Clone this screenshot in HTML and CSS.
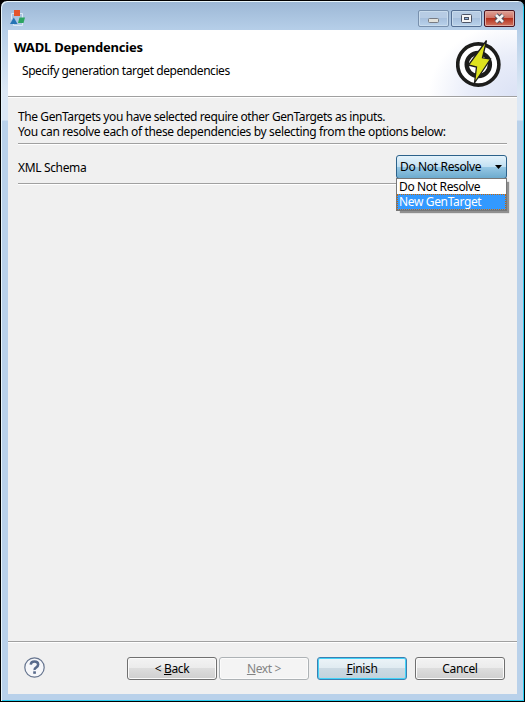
FILE: index.html
```html
<!DOCTYPE html>
<html lang="en">
<head>
<meta charset="utf-8">
<title>WADL Dependencies</title>
<link rel="stylesheet" href="styles.css">
</head>
<body>
<div class="window">
  <div class="titlebar">
    <svg class="app-icon" width="16" height="17" viewBox="0 0 16 17">
      <path d="M1.5 3.5h11v12h-9v-3M1.5 3.5v6" fill="none" stroke="#dbe9f5"/>
      <rect x="4" y="0" width="6" height="6" fill="#e4552b"/>
      <path d="M0 14 3.8 7.5 7.5 14z" fill="#2474b5"/>
      <path d="M9.5 7.5H15L13.5 13H8z" fill="#2ca562"/>
    </svg>
    <div class="controls">
      <span class="ctl"><svg width="29" height="15"><rect x="9.5" y="7.5" width="10" height="4" rx="1" fill="#e2e2dc" stroke="#777b83"/></svg></span>
      <span class="ctl max"><svg width="29" height="15"><rect x="9.5" y="3.5" width="10" height="8" rx="1" fill="#f6f6f6" stroke="#4d5466"/><rect x="12.5" y="6.5" width="4" height="2" fill="#8fb2dc" stroke="#4d5466"/></svg></span>
      <span class="ctl close"><svg width="29" height="15"><path d="M11 4l7 7M18 4l-7 7" stroke="#54505d" stroke-width="4.6"/><path d="M11 4l7 7M18 4l-7 7" stroke="#f4f4f4" stroke-width="2.6"/></svg></span>
    </div>
  </div>
  <div class="client">
    <header class="banner">
      <div>
        <h1>WADL Dependencies</h1>
        <p class="subtitle">Specify generation target dependencies</p>
      </div>
      <svg class="logo" width="48" height="50" viewBox="0 0 48 50">
        <circle cx="22.3" cy="25.5" r="20.6" fill="#fff" stroke="#1d1d1b" stroke-width="3.6"/>
        <circle cx="22.3" cy="25.5" r="11.6" fill="#fff" stroke="#1d1d1b" stroke-width="4.4"/>
        <path d="M30.5 1.5 L12.5 26 L20.5 28 L18.5 44 L34.5 20 L26.5 18.8 Z" fill="#dfe31f" stroke="#1d1d1b" stroke-width="1.3"/>
      </svg>
    </header>
    <main class="page">
      <p class="intro"><span class="line-one">The GenTargets you have selected require other GenTargets as inputs.</span><br><span>You can resolve each of these dependencies by selecting from the options below:</span></p>
      <div class="rule"></div>
      <div class="row">
        <label>XML Schema</label>
        <div class="combo"><span>Do Not Resolve</span><svg width="7" height="4"><path d="M0 0h7L3.5 4z" fill="#000"/></svg>
          <div class="menu">
            <div class="option">Do Not Resolve</div>
            <div class="option selected">New GenTarget</div>
          </div>
        </div>
      </div>
      <div class="rule"></div>
    </main>
    <footer class="footer">
      <svg class="help" width="21" height="21" viewBox="0 0 21 21"><circle cx="10.5" cy="10.5" r="9.7" fill="#f6f7fa" stroke="#66758f" stroke-width="1.2"/><path d="M6.7 7.7Q7 4.6 10.5 4.6T14.2 7.6Q14.2 9.2 12.3 10.3T10.6 13" fill="none" stroke="#596b8c" stroke-width="2.5"/><rect x="9.2" y="14.3" width="2.7" height="2.5" fill="#596b8c"/></svg>
      <div class="buttons">
        <span class="btn">&lt; <u>B</u>ack</span>
        <span class="btn disabled"><u>N</u>ext &gt;</span>
        <span class="btn primary"><u>F</u>inish</span>
        <span class="btn">Cancel</span>
      </div>
    </footer>
  </div>
</div>
</body>
</html>
```
FILE: styles.css
```css
* { box-sizing: border-box; }
body {
  margin: 0;
  background: #000;
  font: 12px/15px "Noto Sans", "Open Sans", sans-serif;
  letter-spacing: -0.35px;
  color: #000;
}
h1, p { margin: 0; font-size: 12px; }
.window {
  width: 525px;
  height: 702px;
  border: 1px solid #000;
  border-radius: 7px 7px 0 0;
  padding: 0 6px 7px;
  background: linear-gradient(#9cb7d5 0, #b5cee8 28px, #dce8f5 90px, #dce8f5 119px, #b9d1ea 120px);
  box-shadow: inset 1px 1px 0 #e8f5fb, inset -1px -1px 0 #29cdf0;
  display: flex;
  flex-direction: column;
}
.titlebar {
  height: 29px;
  flex: none;
  display: flex;
  justify-content: space-between;
  padding: 9px 3px 0 3px;
}
.controls { display: flex; gap: 2px; }
.ctl {
  width: 31px;
  height: 17px;
  border: 1px solid #7890ad;
  border-radius: 2px;
  background: linear-gradient(#b7cce4 0 48%, #a7c0dd 50%, #b9d2eb);
  box-shadow: inset 0 0 0 1px #c9dced;
}
.ctl svg { display: block; }
.ctl.max { border-color: #556f93; }
.ctl.close {
  border-color: #4b1522;
  background: linear-gradient(#dfa197 0, #cf7263 47%, #b5311d 50%, #d17662);
  box-shadow: inset 0 0 0 1px #e0a99e;
}
.client {
  flex: 1;
  margin: 0 1px;
  background: #f0f0f0;
  display: flex;
  flex-direction: column;
}
.banner {
  height: 67px;
  display: flex;
  justify-content: space-between;
  padding: 10px 15px 0 6px;
  background: radial-gradient(ellipse 90px 75px at 510px 67px, #dbe2f5 0, #e9edf9 55%, #fff 100%);
  border-bottom: 1px solid #a0a0a0;
  box-shadow: 0 1px #fff;
}
h1 { font-weight: 700; font-size: 13px; letter-spacing: -0.2px; }
.subtitle { padding: 8px 0 0 8px; letter-spacing: -0.43px; }
.logo { margin: -1px -2px 0 0; }
.page { flex: 1; padding: 12px 10px 0; }
.intro { height: 34px; }
.line-one { letter-spacing: -0.41px; }
.rule { height: 2px; border-top: 1px solid #a0a0a0; border-bottom: 1px solid #fff; }
.row {
  height: 38px;
  display: flex;
  align-items: center;
  justify-content: space-between;
  padding-top: 6px;
}
.combo {
  position: relative;
  width: 111px;
  height: 24px;
  margin-top: -1px;
  border: 1px solid #2c628b;
  border-radius: 3px;
  background: linear-gradient(#e5f3fb 0, #c3e1f3 48%, #97c8e5 50%, #6dabce);
  display: flex;
  align-items: center;
  justify-content: space-between;
  padding: 0 4px 0 3px;
}
.menu {
  position: absolute;
  z-index: 1;
  left: -1px;
  top: 22px;
  width: 111px;
  height: 33px;
  border: 1px solid #777;
  background: #fff;
  box-shadow: 3px 3px 1px -1px #0006;
}
.option { height: 15px; padding-left: 2px; line-height: 15px; }
.selected { height: 16px; background: #3399ff; color: #fff; outline: 1px dotted #cc6600; outline-offset: -1px; }
.footer {
  height: 53px;
  border-top: 1px solid #a0a0a0;
  box-shadow: inset 0 1px #fff;
  display: flex;
  justify-content: space-between;
  padding: 15px 12px 0 16px;
}
.buttons { display: flex; }
.btn {
  width: 90px;
  height: 23px;
  margin-left: 8px;
  border: 1px solid #707070;
  border-radius: 3px;
  background: linear-gradient(#f3f3f3 0, #ebebeb 48%, #dddddd 50%, #cfcfcf);
  box-shadow: inset 0 0 0 1px #fbfbfb;
  text-align: center;
  line-height: 22px;
}
.disabled { margin-left: 2px; border-color: #adb2b5; background: #f4f4f4; color: #838383; }
.primary { border-color: #3c7fb1; background: linear-gradient(#ecf4f8 0, #e0ebf1 48%, #ccdae3 50%, #c2d2dc); box-shadow: inset 0 0 0 1px #43d3f8; }
u { text-underline-offset: 1px; }
```
